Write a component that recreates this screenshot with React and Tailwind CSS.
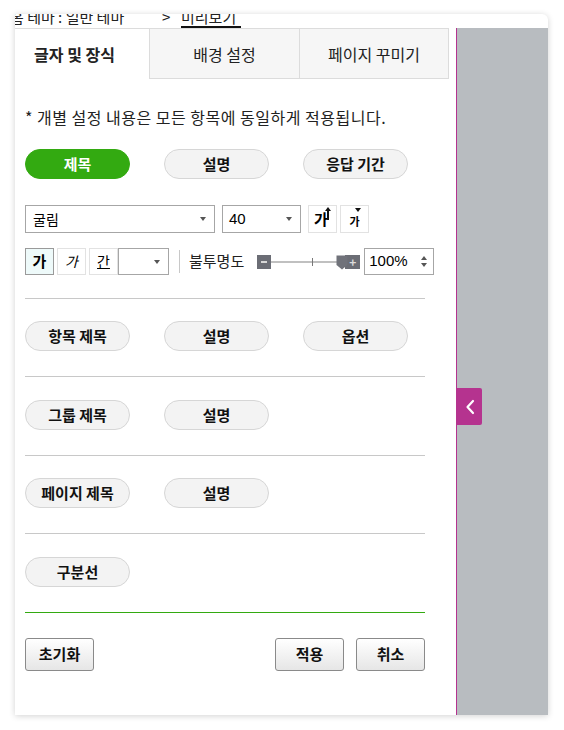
import React from 'react';

const font = { fontFamily: '"Noto Sans CJK KR", "Noto Sans", sans-serif' };

const Pill = ({ children, active }) => (
  <button
    className={
      'h-[30px] w-[105px] rounded-full border text-[15px] font-bold ' +
      (active
        ? 'bg-[#33aa11] border-[#33aa11] text-white'
        : 'bg-[#f3f3f3] border-[#d6d6d6] text-[#111]')
    }
  >
    {children}
  </button>
);

const PillRow = ({ items, top = 'pt-[22px]' }) => (
  <div className={'flex gap-[34px] pb-[25px] ' + top}>
    {items.map((t, i) => (
      <Pill key={i}>{t}</Pill>
    ))}
  </div>
);

const Caret = () => (
  <span className="w-0 h-0 border-l-[3.5px] border-r-[3.5px] border-t-[4px] border-l-transparent border-r-transparent border-t-[#555]" />
);

const ActionButton = ({ children }) => (
  <button className="h-[33px] w-[69px] rounded-[3px] border border-[#8a8a8a] bg-gradient-to-b from-white to-[#e6e6e6] text-[15px] font-bold text-[#111]">
    {children}
  </button>
);

export default function App() {
  return (
    <div className="w-[564px] h-[730px] bg-white pt-[14px] pl-[15px]" style={font}>
      <div className="w-[533px] h-[701px] bg-white rounded-tr-[6px] shadow-[0_1px_6px_rgba(0,0,0,0.18)] flex flex-col overflow-hidden">
        {/* clipped breadcrumb, scrolled under the card top */}
        <div className="h-[14px] overflow-hidden relative text-[15px] text-[#222] whitespace-nowrap leading-[18px]">
          <span className="absolute left-[-5px] top-[-6px]">홈 테마 : 일반 테마</span>
          <span className="absolute left-[147px] top-[-6px]">&gt;</span>
          <span className="absolute left-[166px] top-[-8px] h-[22px] w-[60px] border-b-2 border-[#111] pt-[2px]">미리보기</span>
        </div>

        <div className="flex flex-1">
          {/* main */}
          <div className="w-[441px] flex flex-col">
            <div className="flex h-[51px] w-[434px] border-t border-[#dcdcdc] text-[16px] text-[#222]">
              <div className="w-[134px] flex items-center justify-center pr-[15px] font-bold bg-white">글자 및 장식</div>
              <div className="w-[150px] flex items-center justify-center bg-[#f6f6f6] border-l border-b border-[#dcdcdc]">배경 설정</div>
              <div className="w-[150px] flex items-center justify-center bg-[#f6f6f6] border-l border-r border-b border-[#dcdcdc]">페이지 꾸미기</div>
            </div>

            <div className="pl-[10px] w-[431px] flex flex-col">
              <p className="mt-[28px] text-[16px] tracking-[0.5px] text-[#222] leading-[20px] whitespace-nowrap">* 개별 설정 내용은 모든 항목에 동일하게 적용됩니다.</p>

              <div className="flex gap-[34px] mt-[22px]">
                <Pill active>제목</Pill>
                <Pill>설명</Pill>
                <Pill>응답 기간</Pill>
              </div>

              {/* font row */}
              <div className="flex items-center mt-[26px] h-[28px]">
                <div className="w-[190px] h-[28px] border border-[#a6a6a6] flex items-center justify-between pl-[7px] pr-[8px] text-[14px]">
                  <span>굴림</span>
                  <Caret />
                </div>
                <div className="ml-[7px] w-[79px] h-[28px] border border-[#a6a6a6] flex items-center justify-between pl-[6px] pr-[8px] text-[15px]" style={{ fontFamily: '"Liberation Sans", sans-serif' }}>
                  <span>40</span>
                  <Caret />
                </div>
                <button className="ml-[7px] w-[29px] h-[28px] border border-[#e2e2e2] bg-white relative flex items-center justify-center text-[15px] font-bold">
                  <span className="mr-[3px]">가</span>
                  <svg className="absolute right-[5px] top-[1px]" width="6" height="14" viewBox="0 0 6 14">
                    <path d="M3 0 L6 4 H4 V13 H2 V4 H0 Z" fill="#111" />
                  </svg>
                </button>
                <button className="ml-[3px] w-[29px] h-[28px] border border-[#e2e2e2] bg-white relative flex items-end justify-center pb-[3px] text-[11px] font-bold">
                  가
                  <svg className="absolute right-[7px] top-[2px]" width="6" height="5" viewBox="0 0 6 5">
                    <path d="M0 0 H6 L3 4 Z" fill="#111" />
                  </svg>
                </button>
              </div>

              {/* style row */}
              <div className="flex items-center mt-[15px] h-[27px] whitespace-nowrap">
                <button className="w-[29px] h-[27px] border border-[#9a9a9a] bg-[#eefafa] text-[15px] font-bold">가</button>
                <button className="ml-[3px] w-[29px] h-[27px] border border-[#e2e2e2] bg-white text-[14px] italic">가</button>
                <button className="ml-[3px] w-[29px] h-[27px] border border-[#e2e2e2] bg-white text-[14px] underline">간</button>
                <div className="w-[51px] h-[27px] border border-[#a6a6a6] flex items-center justify-end pr-[8px]">
                  <Caret />
                </div>
                <div className="ml-[10px] w-px h-[23px] bg-[#c8c8c8]" />
                <span className="ml-[9px] text-[15px] text-[#222]">불투명도</span>
                <div className="ml-[13px] flex items-center">
                  <div className="w-[14px] h-[14px] bg-[#6b6d75] flex items-center justify-center">
                    <span className="w-[6px] h-[2px] bg-[#d8d8d8]" />
                  </div>
                  <div className="relative w-[74px] h-[14px] flex items-center">
                    <div className="w-full h-[2px] bg-[#c0c0c0]" />
                    <div className="absolute left-[41px] top-[3px] w-px h-[8px] bg-[#777]" />
                    <svg className="absolute right-[-3px] top-[0px]" width="12" height="15" viewBox="0 0 12 15">
                      <path d="M0.5 0.5 H11.5 V10 L6 14.5 L0.5 10 Z" fill="#70727a" />
                    </svg>
                  </div>
                  <div className="w-[15px] h-[14px] bg-[#6b6d75] flex items-center justify-center text-[#dcdcdc] text-[12px] font-bold leading-none">+</div>
                </div>
                <div className="ml-[4px] w-[70px] h-[27px] border border-[#a6a6a6] flex items-center justify-between pl-[4px] pr-[6px] text-[15px]" style={{ fontFamily: '"Liberation Sans", sans-serif' }}>
                  <span>100%</span>
                  <div className="flex flex-col gap-[3px]">
                    <span className="w-0 h-0 border-l-[3.5px] border-r-[3.5px] border-b-[4px] border-l-transparent border-r-transparent border-b-[#555]" />
                    <Caret />
                  </div>
                </div>
              </div>

              <div className="mt-[23px] h-px bg-[#c8c8c8] w-[400px]" />
              <PillRow items={['항목 제목', '설명', '옵션']} />
              <div className="h-px bg-[#c8c8c8] w-[400px]" />
              <PillRow items={['그룹 제목', '설명']} top="pt-[23px]" />
              <div className="h-px bg-[#c8c8c8] w-[400px]" />
              <PillRow items={['페이지 제목', '설명']} />
              <div className="h-px bg-[#c8c8c8] w-[400px]" />
              <PillRow items={['구분선']} top="pt-[23px]" />
              <div className="w-[400px] border-t border-[#33aa11]" />

              <div className="flex items-center mt-[25px] w-[400px]">
                <ActionButton>초기화</ActionButton>
                <div className="flex-1" />
                <ActionButton>적용</ActionButton>
                <div className="ml-[12px]">
                  <ActionButton>취소</ActionButton>
                </div>
              </div>
            </div>
          </div>

          {/* side panel */}
          <div className="flex-1 bg-[#b8bcc0] border-l border-[#b5338f] relative">
            <div className="absolute left-0 top-[360px] w-[25px] h-[37px] bg-[#b5338f] rounded-r-[2px] flex items-center justify-center">
              <svg width="10" height="16" viewBox="0 0 10 16">
                <path d="M8 2 L2.5 8 L8 14" stroke="white" strokeWidth="2.2" fill="none" strokeLinecap="round" strokeLinejoin="round" />
              </svg>
            </div>
          </div>
        </div>
      </div>
    </div>
  );
}
